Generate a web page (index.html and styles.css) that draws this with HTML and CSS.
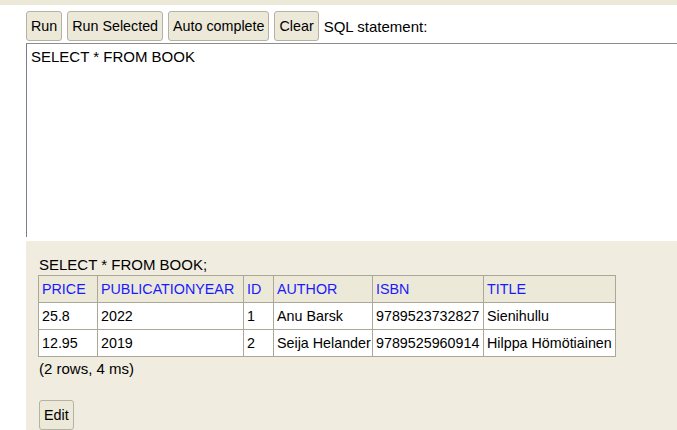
FILE: index.html
```html
<!DOCTYPE html>
<html>
<head>
<meta charset="utf-8">
<link rel="stylesheet" href="styles.css">
</head>
<body>
<div class="topbar"></div>
<div class="query">
  <div class="toolbar">
    <button class="btn">Run</button>
    <button class="btn">Run Selected</button>
    <button class="btn">Auto complete</button>
    <button class="btn">Clear</button>
    <span class="label">SQL statement:</span>
  </div>
  <div class="editor">SELECT * FROM BOOK</div>
</div>
<div class="result">
  <div class="sql">SELECT * FROM BOOK;</div>
  <table class="rs">
    <colgroup>
      <col class="c-price"><col class="c-year"><col class="c-id"><col class="c-author"><col class="c-isbn"><col class="c-title">
    </colgroup>
    <tr><th>PRICE</th><th>PUBLICATIONYEAR</th><th>ID</th><th>AUTHOR</th><th>ISBN</th><th>TITLE</th></tr>
    <tr><td>25.8</td><td>2022</td><td>1</td><td>Anu Barsk</td><td>9789523732827</td><td>Sienihullu</td></tr>
    <tr><td>12.95</td><td>2019</td><td>2</td><td>Seija Helander</td><td>9789525960914</td><td>Hilppa Hömötiainen</td></tr>
  </table>
  <div class="info">(2 rows, 4 ms)</div>
  <button class="btn edit">Edit</button>
</div>
</body>
</html>
```
FILE: styles.css
```css
html, body {
  margin: 0;
  padding: 0;
  background: #ffffff;
  overflow: hidden;
  height: 430px;
}
body {
  font-family: "Liberation Sans", Arial, sans-serif;
  font-size: 15px;
  color: #000;
}
.topbar {
  height: 5px;
  background: #ece9d8;
}
.query {
  height: 232px;
  box-sizing: border-box;
  padding: 6px 0 0 26px;
  overflow: hidden;
}
.toolbar {
  display: flex;
  align-items: center;
  gap: 5px;
  height: 30px;
}
.btn {
  font-family: "Liberation Sans", Arial, sans-serif;
  font-size: 14.3px;
  color: #000;
  height: 30px;
  padding: 0 4px;
  margin: 0;
  background: #ece9d8;
  border: 1px solid #b5b2a5;
  border-radius: 3px;
}
.label {
  line-height: 17px;
}
.editor {
  margin-top: 2px;
  width: 700px;
  height: 300px;
  box-sizing: border-box;
  border-top: 1px solid #8c8c8c;
  border-left: 1px solid #7d7d8c;
  padding: 4px 4px;
  line-height: 17px;
}
.result {
  margin: 4px 0 0 26px;
  height: 189px;
  box-sizing: border-box;
  background: #f0ede0;
  padding: 15px 0 0 12px;
}
.sql {
  line-height: 17px;
  padding-left: 1px;
  margin-bottom: 2px;
}
.rs {
  border-collapse: collapse;
  table-layout: fixed;
  width: 577px;
  font-size: 14.3px;
}
.c-price { width: 59px; }
.c-year { width: 146px; }
.c-id { width: 30px; }
.c-author { width: 99px; }
.c-isbn { width: 111px; }
.c-title { width: 132px; }
.rs th, .rs td {
  border: 1px solid #aca899;
  height: 26px;
  padding: 0 0 0 3px;
  line-height: 16px;
  text-align: left;
  font-weight: normal;
  white-space: nowrap;
  overflow: hidden;
  vertical-align: middle;
}
.rs th {
  background: #ece9d8;
  color: #1a1aff;
}
.rs td {
  background: #ffffff;
}
.info {
  margin-top: 3px;
  line-height: 17px;
  padding-left: 1px;
}
.edit {
  display: block;
  margin-top: 23px;
  margin-left: 1px;
}
```
